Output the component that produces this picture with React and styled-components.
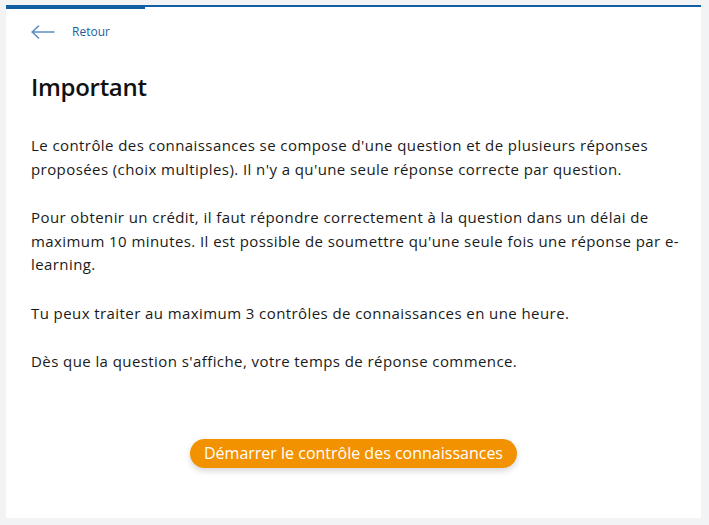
import React from "react";
import styled, { createGlobalStyle } from "styled-components";

const GlobalStyle = createGlobalStyle`
  html, body {
    margin: 0;
    padding: 0;
    background: #f2f3f5;
  }
  body {
    font-family: "Open Sans", "Liberation Sans", sans-serif;
    color: #1a1a1a;
  }
`;

const paragraphs = [
  "Le contrôle des connaissances se compose d'une question et de plusieurs réponses proposées (choix multiples). Il n'y a qu'une seule réponse correcte par question.",
  "Pour obtenir un crédit, il faut répondre correctement à la question dans un délai de maximum 10 minutes. Il est possible de soumettre qu'une seule fois une réponse par e-learning.",
  "Tu peux traiter au maximum 3 contrôles de connaissances en une heure.",
  "Dès que la question s'affiche, votre temps de réponse commence.",
];

const BackArrow = () => (
  <svg width="24" height="14" viewBox="0 0 24 14" fill="none">
    <path
      d="M1 7h22M7.5 1L1.2 7l6.3 6"
      stroke="#5b8fc4"
      strokeWidth="1.6"
      strokeLinecap="round"
      strokeLinejoin="round"
    />
  </svg>
);

const App = () => {
  return (
    <>
      <GlobalStyle />
      <S.Page>
        <S.Card>
          <S.Track>
            <S.Fill $progress={20} />
          </S.Track>
          <S.Content>
            <S.BackLink href="#">
              <BackArrow />
              <span>Retour</span>
            </S.BackLink>
            <S.Title>Important</S.Title>
            {paragraphs.map((text, i) => (
              <S.Paragraph key={i}>{text}</S.Paragraph>
            ))}
            <S.Actions>
              <S.StartButton>Démarrer le contrôle des connaissances</S.StartButton>
            </S.Actions>
          </S.Content>
        </S.Card>
      </S.Page>
    </>
  );
};

export default App;

const S = {
  Page: styled.div`
    padding: 5px 8px 7px 6px;
    box-sizing: border-box;
    height: 525px;
  `,
  Card: styled.div`
    display: flex;
    flex-direction: column;
    height: 513px;
    background: #ffffff;
  `,
  Track: styled.div`
    height: 2px;
    background: #125ea2;
  `,
  Fill: styled.div`
    width: ${({ $progress }) => $progress}%;
    height: 4px;
    background: #125ea2;
  `,
  Content: styled.div`
    display: flex;
    flex-direction: column;
    padding: 0 14px 0 25px;
  `,
  BackLink: styled.a`
    display: flex;
    align-items: center;
    gap: 17px;
    height: 14px;
    margin-top: 18px;
    font-size: 12px;
    color: #1b5e9c;
    text-decoration: none;
    span {
      line-height: 14px;
    }
  `,
  Title: styled.h1`
    margin: 32px 0 31px;
    font-size: 24px;
    line-height: 32px;
    font-weight: 600;
    letter-spacing: -0.3px;
    color: #111111;
  `,
  Paragraph: styled.p`
    margin: 0 0 25px;
    font-size: 15px;
    line-height: 23.5px;
    letter-spacing: 0.42px;
    color: #1a1a1a;
  `,
  Actions: styled.div`
    display: flex;
    justify-content: center;
    margin-top: 40px;
    padding-right: 11px;
  `,
  StartButton: styled.button`
    height: 29px;
    padding: 0 14px;
    border: none;
    border-radius: 15px;
    background: #f39200;
    color: #ffffff;
    font-family: "Open Sans", "Liberation Sans", sans-serif;
    font-size: 16px;
    box-shadow: 0 3px 6px rgba(0, 0, 0, 0.16);
    cursor: pointer;
  `,
};
